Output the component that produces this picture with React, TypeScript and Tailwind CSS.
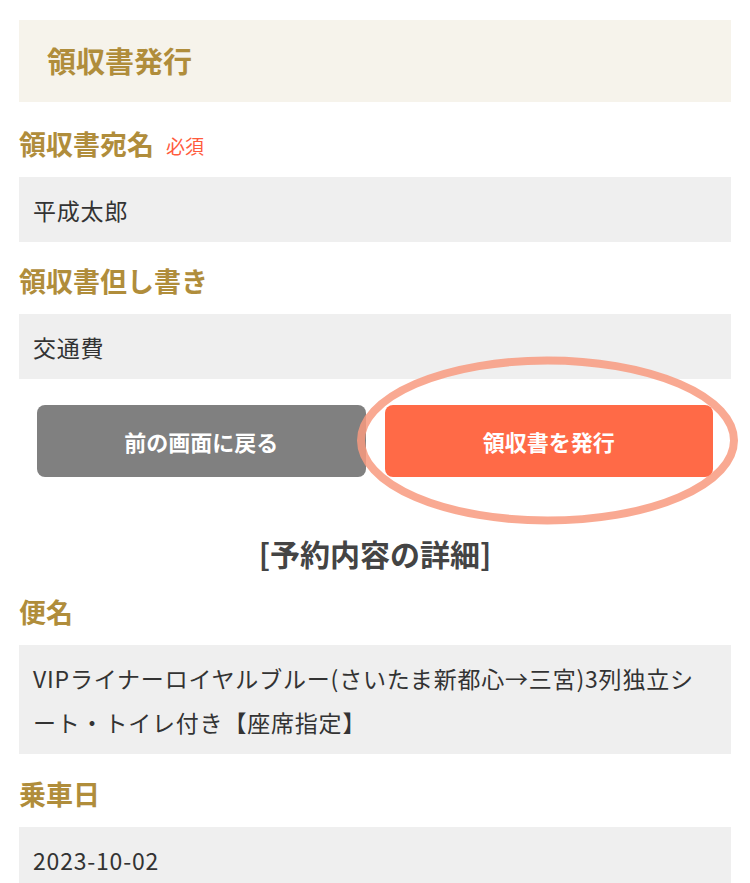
import React from 'react';

const font = { fontFamily: '"Noto Sans CJK JP", "Noto Sans", sans-serif' };

interface FieldProps {
  label: string;
  required?: boolean;
  value: string;
  className?: string;
}

// Gold heading + grey read-only value box
const Field: React.FC<FieldProps> = ({ label, required, value, className = '' }) => (
  <div className={className}>
    <div className="flex h-[39px] items-center">
      <span className="text-[27px] font-bold leading-[39px] text-[#b08d3b]">{label}</span>
      {required && <span className="ml-[12px] mt-[4px] text-[19px] leading-[39px] text-[#ff5b3d]">必須</span>}
    </div>
    <div className="mt-[14px] bg-[#efefef] px-[14px] py-[10.5px] text-[23px] leading-[44px] tracking-[0.8px] text-[#333333]">
      {value}
    </div>
  </div>
);

export default function App() {
  return (
    <div className="h-[883px] w-[750px] overflow-hidden bg-white px-[19px] pt-[20px]" style={font}>
      <div className="flex h-[82px] items-center bg-[#f6f3eb] pl-[28px]">
        <h1 className="text-[29px] font-bold text-[#b08d3b]">領収書発行</h1>
      </div>

      <Field className="mt-[22px]" label="領収書宛名" required value="平成太郎" />
      <Field className="mt-[19px]" label="領収書但し書き" value="交通費" />

      <div className="mt-[26px] flex gap-[19px] px-[18px]">
        <button className="h-[72px] flex-1 rounded-[8px] bg-[#808080] text-[22px] font-bold text-white">
          前の画面に戻る
        </button>
        <div className="relative flex-1">
          <button className="h-[72px] w-full rounded-[8px] bg-[#ff6a47] text-[22px] font-bold text-white">
            領収書を発行
          </button>
          {/* annotation ring drawn over the issue button */}
          <svg
            className="pointer-events-none absolute left-[-28px] top-[-49px]"
            width="382"
            height="170"
            viewBox="0 0 382 170"
          >
            <ellipse cx="190.5" cy="84.5" rx="186.5" ry="80" fill="none" stroke="#f89a7f" strokeOpacity="0.85" strokeWidth="8" />
          </svg>
        </div>
      </div>

      <h2 className="mt-[55px] text-center text-[30px] font-bold leading-[42px] text-[#444444]">[予約内容の詳細]</h2>

      <Field
        className="mt-[18px]"
        label="便名"
        value="VIPライナーロイヤルブルー(さいたま新都心→三宮)3列独立シート・トイレ付き【座席指定】"
      />
      <Field className="mt-[20px]" label="乗車日" value="2023-10-02" />
    </div>
  );
}
